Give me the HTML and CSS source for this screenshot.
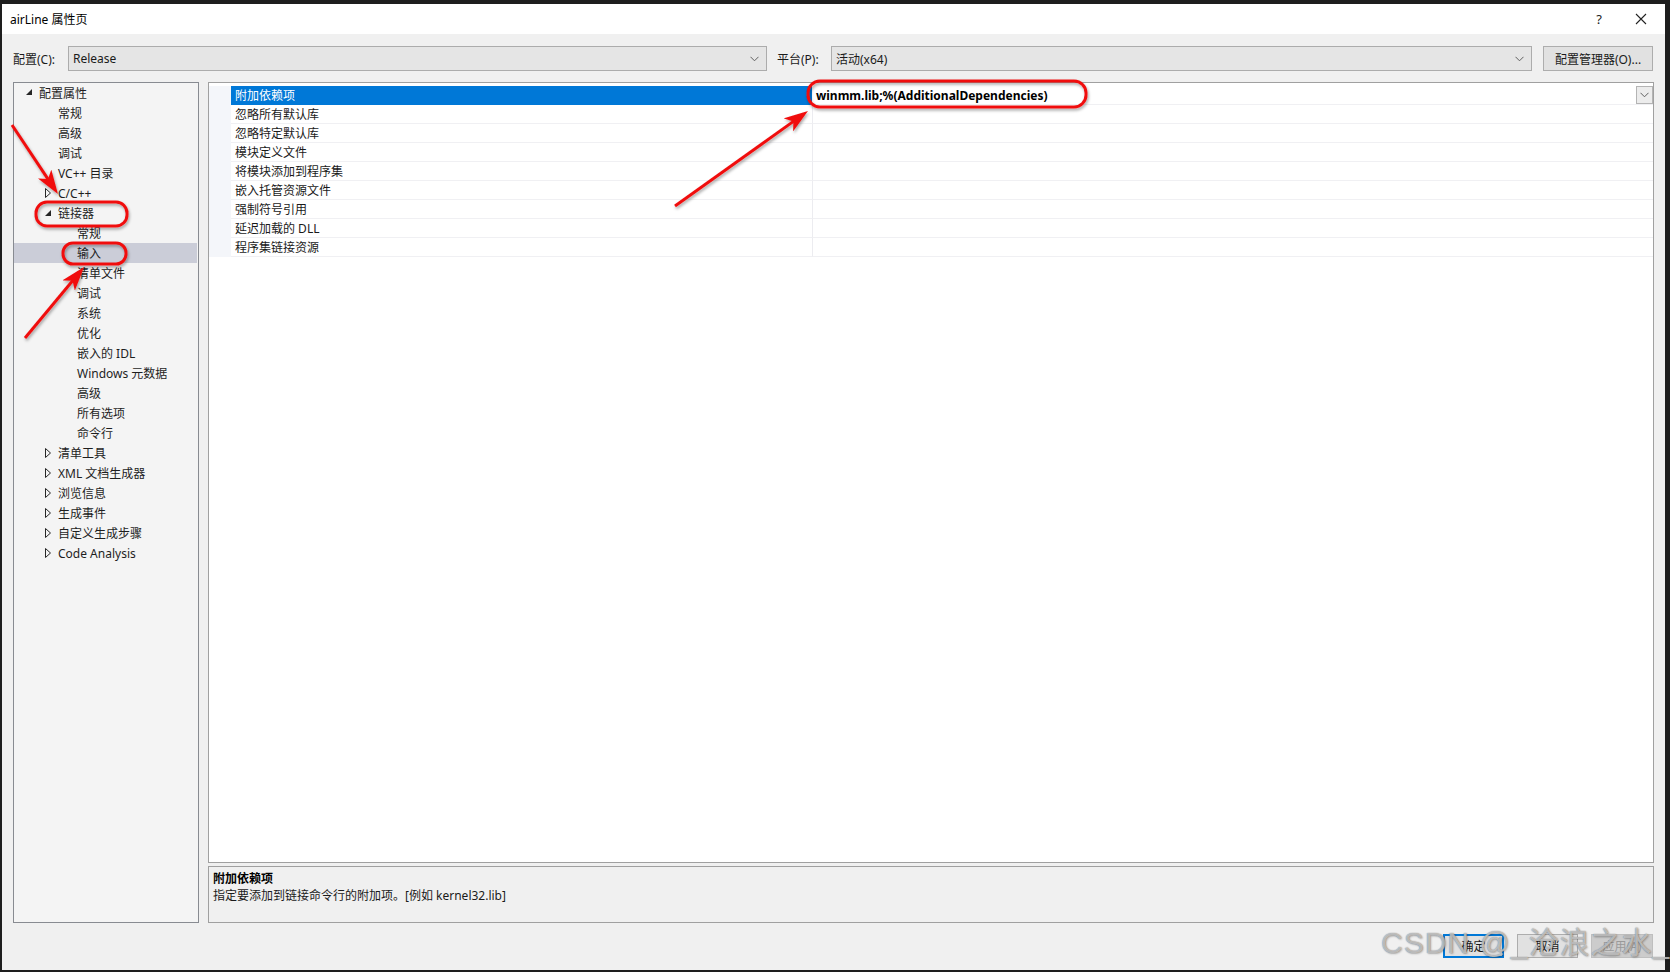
FILE: index.html
```html
<!DOCTYPE html>
<html lang="zh-CN">
<head>
<meta charset="utf-8">
<title>airLine 属性页</title>
<link rel="stylesheet" href="styles.css">
</head>
<body>
<div class="dialog">
  <div class="titlebar">
    <span class="title">airLine 属性页</span>
    <span class="help">?</span>
    <svg class="close" width="12" height="12" viewBox="0 0 12 12"><path d="M1 1 L11 11 M11 1 L1 11" stroke="#222" stroke-width="1.1" fill="none"/></svg>
  </div>

  <div class="toolbar">
    <span class="lbl lbl-cfg">配置(C):</span>
    <div class="combo combo-cfg"><span>Release</span><svg class="chev" width="9" height="6" viewBox="0 0 9 6"><path d="M0.5 0.8 L4.5 4.8 L8.5 0.8" stroke="#606060" fill="none"/></svg></div>
    <span class="lbl lbl-plat">平台(P):</span>
    <div class="combo combo-plat"><span>活动(x64)</span><svg class="chev" width="9" height="6" viewBox="0 0 9 6"><path d="M0.5 0.8 L4.5 4.8 L8.5 0.8" stroke="#606060" fill="none"/></svg></div>
    <button class="btn btn-mgr">配置管理器(O)...</button>
  </div>

  <div class="main">
    <div class="tree">
      <div class="tr lv0"><span class="tg"><svg width="7" height="7" viewBox="0 0 7 7"><path d="M6 0 L6 6 L0 6 Z" fill="#262626"/></svg></span>配置属性</div>
      <div class="tr lv1"><span class="tg"></span>常规</div>
      <div class="tr lv1"><span class="tg"></span>高级</div>
      <div class="tr lv1"><span class="tg"></span>调试</div>
      <div class="tr lv1"><span class="tg"></span>VC++ 目录</div>
      <div class="tr lv1"><span class="tg"><svg width="7" height="10" viewBox="0 0 7 10"><path d="M0.5 0.5 L5.5 5 L0.5 9.5 Z" fill="none" stroke="#262626"/></svg></span>C/C++</div>
      <div class="tr lv1"><span class="tg"><svg width="7" height="7" viewBox="0 0 7 7"><path d="M6 0 L6 6 L0 6 Z" fill="#262626"/></svg></span>链接器</div>
      <div class="tr lv2"><span class="tg"></span>常规</div>
      <div class="tr lv2 sel"><span class="tg"></span>输入</div>
      <div class="tr lv2"><span class="tg"></span>清单文件</div>
      <div class="tr lv2"><span class="tg"></span>调试</div>
      <div class="tr lv2"><span class="tg"></span>系统</div>
      <div class="tr lv2"><span class="tg"></span>优化</div>
      <div class="tr lv2"><span class="tg"></span>嵌入的 IDL</div>
      <div class="tr lv2"><span class="tg"></span>Windows 元数据</div>
      <div class="tr lv2"><span class="tg"></span>高级</div>
      <div class="tr lv2"><span class="tg"></span>所有选项</div>
      <div class="tr lv2"><span class="tg"></span>命令行</div>
      <div class="tr lv1"><span class="tg"><svg width="7" height="10" viewBox="0 0 7 10"><path d="M0.5 0.5 L5.5 5 L0.5 9.5 Z" fill="none" stroke="#262626"/></svg></span>清单工具</div>
      <div class="tr lv1"><span class="tg"><svg width="7" height="10" viewBox="0 0 7 10"><path d="M0.5 0.5 L5.5 5 L0.5 9.5 Z" fill="none" stroke="#262626"/></svg></span>XML 文档生成器</div>
      <div class="tr lv1"><span class="tg"><svg width="7" height="10" viewBox="0 0 7 10"><path d="M0.5 0.5 L5.5 5 L0.5 9.5 Z" fill="none" stroke="#262626"/></svg></span>浏览信息</div>
      <div class="tr lv1"><span class="tg"><svg width="7" height="10" viewBox="0 0 7 10"><path d="M0.5 0.5 L5.5 5 L0.5 9.5 Z" fill="none" stroke="#262626"/></svg></span>生成事件</div>
      <div class="tr lv1"><span class="tg"><svg width="7" height="10" viewBox="0 0 7 10"><path d="M0.5 0.5 L5.5 5 L0.5 9.5 Z" fill="none" stroke="#262626"/></svg></span>自定义生成步骤</div>
      <div class="tr lv1"><span class="tg"><svg width="7" height="10" viewBox="0 0 7 10"><path d="M0.5 0.5 L5.5 5 L0.5 9.5 Z" fill="none" stroke="#262626"/></svg></span>Code Analysis</div>
    </div>

    <div class="rightcol">
      <div class="grid">
        <div class="prow active">
          <div class="strip"></div>
          <div class="pname">附加依赖项</div>
          <div class="pval bold"><span>winmm.lib;%(AdditionalDependencies)</span><span class="ddbtn"><svg width="9" height="6" viewBox="0 0 9 6"><path d="M0.5 0.8 L4.5 4.8 L8.5 0.8" stroke="#606060" fill="none"/></svg></span></div>
        </div>
        <div class="prow"><div class="strip"></div><div class="pname">忽略所有默认库</div><div class="pval"></div></div>
        <div class="prow"><div class="strip"></div><div class="pname">忽略特定默认库</div><div class="pval"></div></div>
        <div class="prow"><div class="strip"></div><div class="pname">模块定义文件</div><div class="pval"></div></div>
        <div class="prow"><div class="strip"></div><div class="pname">将模块添加到程序集</div><div class="pval"></div></div>
        <div class="prow"><div class="strip"></div><div class="pname">嵌入托管资源文件</div><div class="pval"></div></div>
        <div class="prow"><div class="strip"></div><div class="pname">强制符号引用</div><div class="pval"></div></div>
        <div class="prow"><div class="strip"></div><div class="pname">延迟加载的 DLL</div><div class="pval"></div></div>
        <div class="prow"><div class="strip"></div><div class="pname">程序集链接资源</div><div class="pval"></div></div>
      </div>
      <div class="desc">
        <div class="desc-title">附加依赖项</div>
        <div class="desc-text">指定要添加到链接命令行的附加项。[例如 kernel32.lib]</div>
      </div>
    </div>
  </div>

  <div class="buttons">
    <button class="btn btn-ok">确定</button>
    <button class="btn btn-cancel">取消</button>
    <button class="btn btn-apply" disabled>应用(A)</button>
  </div>
</div>

<div class="watermark">CSDN @_沧浪之水_</div>

<svg class="annot" width="1670" height="972" viewBox="0 0 1670 972">
  <defs>
    <filter id="sh" x="-20%" y="-20%" width="140%" height="140%">
      <feDropShadow dx="1" dy="2" stdDeviation="1.5" flood-color="#000" flood-opacity="0.35"/>
    </filter>
    <marker id="ah" viewBox="0 0 24 16" refX="10" refY="8" markerWidth="24" markerHeight="16" markerUnits="userSpaceOnUse" orient="auto">
      <path d="M0 0 L24 8 L0 16 L6 8 Z" fill="#f01010"/>
    </marker>
  </defs>
  <g filter="url(#sh)" fill="none" stroke="#f01010" stroke-width="3">
    <rect x="808" y="81" width="278" height="26" rx="12"/>
    <rect x="36" y="202" width="91" height="24" rx="11"/>
    <rect x="63" y="243" width="63" height="21" rx="10"/>
    <line x1="12" y1="125" x2="50.2" y2="182.4" marker-end="url(#ah)"/>
    <line x1="25" y1="338" x2="75.1" y2="277.8" marker-end="url(#ah)"/>
    <line x1="675" y1="206" x2="796.6" y2="119.1" marker-end="url(#ah)"/>
  </g>
</svg>
</body>
</html>
```
FILE: styles.css
```css
* { box-sizing: border-box; }

html, body {
  margin: 0;
}

body {
  width: 1670px;
  height: 972px;
  overflow: hidden;
  background: #1e1e1e;
  padding: 4px 5px 2px 2px;
  font-family: "Segoe UI", "Noto Sans", "Noto Sans CJK SC", sans-serif;
  font-size: 12px;
  color: #1a1a1a;
}

.dialog {
  width: 1663px;
  height: 966px;
  background: #f0f0f0;
  display: flex;
  flex-direction: column;
}

.titlebar {
  height: 30px;
  background: #ffffff;
  display: flex;
  align-items: center;
  padding-left: 8px;
  flex-shrink: 0;
}

.title {
  flex: 1;
  font-size: 12px;
  color: #000;
}

.help {
  font-size: 13px;
  color: #222;
  margin-right: 33px;
}

.close {
  margin-right: 18px;
}

.toolbar {
  margin-top: 12px;
  height: 25px;
  display: flex;
  align-items: stretch;
  padding-left: 11px;
  flex-shrink: 0;
}

.lbl {
  display: flex;
  align-items: center;
  color: #1a1a1a;
}

.lbl-cfg { width: 55px; }
.lbl-plat { width: 54px; margin-left: 10px; }

.combo {
  background: #e5e5e5;
  border: 1px solid #acacac;
  display: flex;
  align-items: center;
  justify-content: space-between;
  padding: 0 7px 0 4px;
}

.combo-cfg { width: 699px; }
.combo-plat { width: 701px; }

.btn {
  font-family: "Segoe UI", "Noto Sans", "Noto Sans CJK SC", sans-serif;
  font-size: 12px;
  color: #1a1a1a;
  background: #e1e1e1;
  border: 1px solid #adadad;
  padding: 0;
  margin: 0;
}

.btn-mgr {
  width: 110px;
  margin-left: 11px;
}

.main {
  margin-top: 11px;
  height: 841px;
  display: flex;
  gap: 9px;
  padding: 0 11px;
  flex-shrink: 0;
}

.tree {
  width: 186px;
  background: #f4f4f4;
  border: 1px solid #888b91;
  padding-top: 0;
}

.tr {
  height: 20px;
  display: flex;
  align-items: center;
  white-space: nowrap;
  color: #1e1e1e;
  margin: 0 1px 0 0;
}

.tr.lv0 { padding-left: 11px; }
.tr.lv1 { padding-left: 30px; }
.tr.lv2 { padding-left: 49px; }

.tr.sel { background: #cbcdd8; }

.tg {
  width: 14px;
  height: 20px;
  display: flex;
  align-items: center;
  flex-shrink: 0;
}

.tr.lv0 .tg svg { margin-left: 1px; margin-top: -2px; }
.tr.lv1 .tg svg { margin-left: 1px; }

.rightcol {
  flex: 1;
  display: flex;
  flex-direction: column;
  gap: 3px;
}

.grid {
  flex: 1;
  background: #ffffff;
  border: 1px solid #a0a0a0;
  padding-top: 3px;
}

.prow {
  display: grid;
  grid-template-columns: 22px 581px 1fr;
  height: 19px;
}

.strip {
  background: #f4f6fa;
}

.pname {
  border-bottom: 1px solid #f0f0f3;
  padding-left: 4px;
  display: flex;
  align-items: center;
  white-space: nowrap;
  color: #1a1a1a;
}

.pval {
  border-bottom: 1px solid #f0f0f3;
  border-left: 1px solid #ececf0;
  display: flex;
  align-items: center;
  justify-content: space-between;
  padding-left: 3px;
  white-space: nowrap;
}

.prow.active .pname {
  background: #0078d7;
  color: #ffffff;
  border-bottom-color: #0078d7;
}

.pval.bold {
  font-weight: bold;
  color: #000;
  border-left-color: #ffffff;
}

.ddbtn {
  width: 17px;
  height: 18px;
  background: #ececec;
  border: 1px solid #b4b4b4;
  display: flex;
  align-items: center;
  justify-content: center;
}

.desc {
  height: 57px;
  background: #f0f0f0;
  border: 1px solid #a0a0a0;
  padding: 3px 4px 2px;
  line-height: 17px;
}

.desc-title {
  font-weight: bold;
  color: #000;
}

.desc-text {
  color: #1a1a1a;
}

.buttons {
  margin-top: 11px;
  height: 24px;
  display: flex;
  justify-content: flex-end;
  gap: 13px;
  padding-right: 12px;
  flex-shrink: 0;
}

.btn-ok {
  width: 61px;
  border: 2px solid #0078d7;
}

.btn-cancel {
  width: 61px;
}

.btn-apply {
  width: 62px;
  background: #cccccc;
  border-color: #bfbfbf;
  color: #9a9a9a;
}

.watermark {
  position: absolute;
  left: 1381px;
  top: 928px;
  font-family: "Liberation Sans", "Noto Sans CJK SC", sans-serif;
  font-size: 30px;
  line-height: 30px;
  letter-spacing: 1px;
  color: rgba(255, 255, 255, 0.55);
  text-shadow: 0 0 1px rgba(90, 90, 90, 0.9), 1px 1px 2px rgba(0, 0, 0, 0.25);
  white-space: nowrap;
  pointer-events: none;
}

.annot {
  position: absolute;
  left: 0;
  top: 0;
  pointer-events: none;
}
```
